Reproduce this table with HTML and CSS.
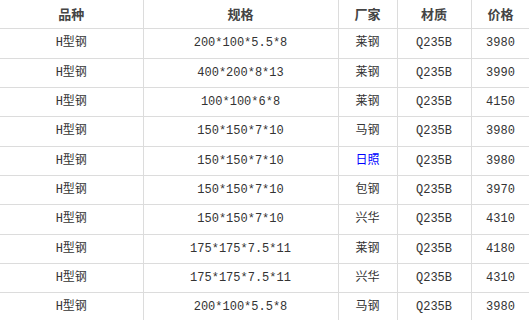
FILE: index.html
```html
<!DOCTYPE html>
<html lang="zh-CN">

<head>
    <meta charset="UTF-8">
    <meta name="viewport" content="width=device-width, initial-scale=1.0">
    <title>H型钢价格</title>
    <link rel="stylesheet" href="styles.css">
</head>

<body>
    <table class="price-table">
        <colgroup>
            <col class="col-kind">
            <col class="col-spec">
            <col class="col-mill">
            <col class="col-mat">
            <col class="col-price">
        </colgroup>
        <thead>
            <tr>
                <th>品种</th>
                <th>规格</th>
                <th>厂家</th>
                <th>材质</th>
                <th>价格</th>
            </tr>
        </thead>
        <tbody>
            <tr><td>H型钢</td><td>200*100*5.5*8</td><td>莱钢</td><td>Q235B</td><td>3980</td></tr>
            <tr><td>H型钢</td><td>400*200*8*13</td><td>莱钢</td><td>Q235B</td><td>3990</td></tr>
            <tr><td>H型钢</td><td>100*100*6*8</td><td>莱钢</td><td>Q235B</td><td>4150</td></tr>
            <tr><td>H型钢</td><td>150*150*7*10</td><td>马钢</td><td>Q235B</td><td>3980</td></tr>
            <tr><td>H型钢</td><td>150*150*7*10</td><td><a href="#" class="mill-link">日照</a></td><td>Q235B</td><td>3980</td></tr>
            <tr><td>H型钢</td><td>150*150*7*10</td><td>包钢</td><td>Q235B</td><td>3970</td></tr>
            <tr><td>H型钢</td><td>150*150*7*10</td><td>兴华</td><td>Q235B</td><td>4310</td></tr>
            <tr><td>H型钢</td><td>175*175*7.5*11</td><td>莱钢</td><td>Q235B</td><td>4180</td></tr>
            <tr><td>H型钢</td><td>175*175*7.5*11</td><td>兴华</td><td>Q235B</td><td>4310</td></tr>
            <tr><td>H型钢</td><td>200*100*5.5*8</td><td>马钢</td><td>Q235B</td><td>3980</td></tr>
        </tbody>
    </table>
</body>

</html>
```

FILE: styles.css
```css
body {
    margin: 0;
    background-color: #fff;
    font-family: "Liberation Mono", "Noto Sans CJK SC", monospace;
    color: #333;
}

.price-table {
    width: 530px;
    border-collapse: collapse;
    table-layout: fixed;
}

.col-kind {
    width: 143px;
}

.col-spec {
    width: 195px;
}

.col-mill {
    width: 59px;
}

.col-mat {
    width: 74px;
}

.col-price {
    width: 59px;
}

.price-table th,
.price-table td {
    height: 28.33px;
    padding: 0;
    text-align: center;
    vertical-align: middle;
    border-right: 1px solid #dcdcdc;
    border-bottom: 1px solid #dcdcdc;
    font-size: 12px;
    line-height: 16px;
    white-space: nowrap;
}

.price-table th {
    font-family: "Noto Sans CJK SC", sans-serif;
    font-size: 13px;
    font-weight: bold;
    color: #444;
}

.mill-link {
    color: #00f;
    text-decoration: none;
}
```
